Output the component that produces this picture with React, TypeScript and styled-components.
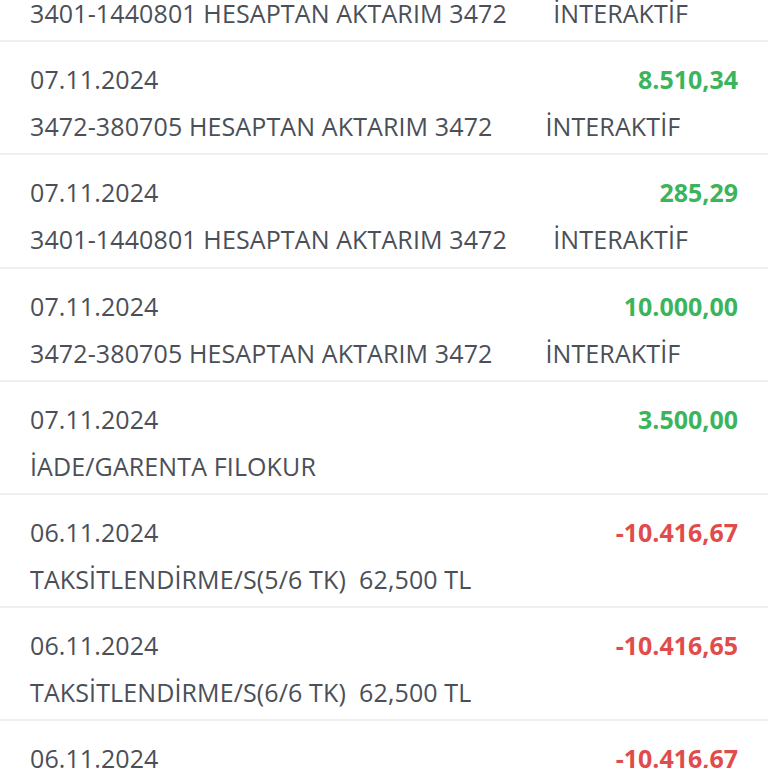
import React from "react";
import styled, { createGlobalStyle } from "styled-components";

const Global = createGlobalStyle`
  html, body { margin: 0; padding: 0; background: #ffffff; }
  body { font-family: "Open Sans", "Noto Sans", sans-serif; overflow: hidden; }
`;

const Screen = styled.div`
  width: 768px;
  height: 768px;
  overflow: hidden;
  background: #ffffff;
`;

const List = styled.div`
  display: flex;
  flex-direction: column;
  margin-top: -71px;
`;

const Row = styled.div`
  display: flex;
  flex-direction: column;
  gap: 13px;
  padding: 20px 30px 10px 30px;
  height: 113.2px;
  box-sizing: border-box;
  border-bottom: 2px solid #eeeff1;
`;

const TopLine = styled.div`
  display: flex;
  justify-content: space-between;
  align-items: center;
  height: 34px;
`;

const DateText = styled.span`
  font-size: 25px;
  color: #4b4f58;
  letter-spacing: 0.1px;
`;

const Amount = styled.span<{ $negative: boolean }>`
  font-size: 25px;
  font-weight: 700;
  color: ${(p) => (p.$negative ? "#e24b4b" : "#3bb45c")};
`;

const Desc = styled.div`
  font-size: 25px;
  line-height: 34px;
  height: 34px;
  color: #4b4f58;
  letter-spacing: 0.12px;
  white-space: pre;
`;

type Tx = { date: string; amount: string; desc: string };

const rows: Tx[] = [
  { date: "07.11.2024", amount: "285,29", desc: "3401-1440801 HESAPTAN AKTARIM 3472       İNTERAKTİF" },
  { date: "07.11.2024", amount: "8.510,34", desc: "3472-380705 HESAPTAN AKTARIM 3472        İNTERAKTİF" },
  { date: "07.11.2024", amount: "285,29", desc: "3401-1440801 HESAPTAN AKTARIM 3472       İNTERAKTİF" },
  { date: "07.11.2024", amount: "10.000,00", desc: "3472-380705 HESAPTAN AKTARIM 3472        İNTERAKTİF" },
  { date: "07.11.2024", amount: "3.500,00", desc: "İADE/GARENTA FILOKUR" },
  { date: "06.11.2024", amount: "-10.416,67", desc: "TAKSİTLENDİRME/S(5/6 TK)  62,500 TL" },
  { date: "06.11.2024", amount: "-10.416,65", desc: "TAKSİTLENDİRME/S(6/6 TK)  62,500 TL" },
  { date: "06.11.2024", amount: "-10.416,67", desc: "TAKSİTLENDİRME/S(5/6 TK)  62,500 TL" },
];

export default function App() {
  return (
    <Screen>
      <Global />
      <List>
        {rows.map((r, i) => (
          <Row key={i}>
            <TopLine>
              <DateText>{r.date}</DateText>
              <Amount $negative={r.amount.startsWith("-")}>{r.amount}</Amount>
            </TopLine>
            <Desc>{r.desc}</Desc>
          </Row>
        ))}
      </List>
    </Screen>
  );
}
